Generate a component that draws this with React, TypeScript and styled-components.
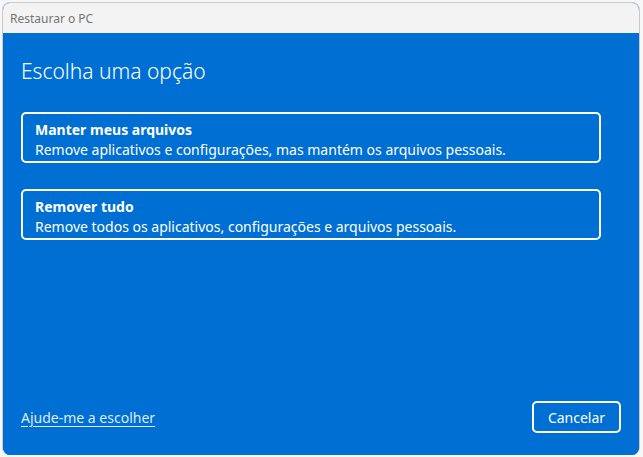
import React from "react";
import styled, { createGlobalStyle } from "styled-components";

const Global = createGlobalStyle`
  html, body { margin: 0; padding: 0; background: #ffffff; }
  body { font-family: "Noto Sans", "Open Sans", sans-serif; }
`;

const Page = styled.div`
  width: 643px;
  height: 457px;
  padding: 2px 3px 2px 2px;
  box-sizing: border-box;
  background: #f7f7f7;
`;

const Window = styled.div`
  width: 638px;
  height: 453px;
  border: 1px solid #c9c9c9;
  border-bottom: none;
  border-radius: 8px;
  overflow: hidden;
  box-sizing: border-box;
  display: flex;
  flex-direction: column;
  background: #006fd3;
`;

const TitleBar = styled.div`
  height: 30px;
  flex: none;
  background: #f3f3f3;
  display: flex;
  align-items: center;
  padding-left: 7px;
  font-size: 12px;
  color: #757575;
`;

const Body = styled.div`
  flex: 1;
  background: #006fd3;
  color: #ffffff;
  display: flex;
  flex-direction: column;
  padding: 22px 18px 22px 18px;
`;

const Heading = styled.h1`
  margin: 0 0 25px 0;
  font-weight: 300;
  font-size: 21px;
  line-height: 32px;
`;

const Options = styled.div`
  display: flex;
  flex-direction: column;
  gap: 26px;
`;

const Option = styled.button`
  all: unset;
  box-sizing: border-box;
  width: 580px;
  height: 51px;
  border: 2px solid #ffffff;
  border-radius: 5px;
  padding: 6px 12px 0 12px;
  display: flex;
  flex-direction: column;
  color: #ffffff;
  font-family: inherit;
`;

const OptionTitle = styled.div`
  font-weight: 700;
  font-size: 14px;
  line-height: 20px;
`;

const OptionDesc = styled.div`
  font-size: 14px;
  line-height: 20px;
`;

const Footer = styled.div`
  margin-top: auto;
  display: flex;
  align-items: center;
  justify-content: space-between;
`;

const HelpLink = styled.a`
  font-size: 14px;
  color: #dfeaf6;
  text-decoration: underline;
  text-underline-offset: 3px;
`;

const CancelButton = styled.button`
  all: unset;
  box-sizing: border-box;
  width: 89px;
  height: 32px;
  border: 2px solid #ffffff;
  border-radius: 5px;
  display: flex;
  align-items: center;
  justify-content: center;
  color: #ffffff;
  font-size: 14px;
  font-family: inherit;
`;

export default function App() {
  return (
    <>
      <Global />
      <Page>
        <Window>
          <TitleBar>Restaurar o PC</TitleBar>
          <Body>
            <Heading>Escolha uma opção</Heading>
            <Options>
              <Option>
                <OptionTitle>Manter meus arquivos</OptionTitle>
                <OptionDesc>Remove aplicativos e configurações, mas mantém os arquivos pessoais.</OptionDesc>
              </Option>
              <Option>
                <OptionTitle>Remover tudo</OptionTitle>
                <OptionDesc>Remove todos os aplicativos, configurações e arquivos pessoais.</OptionDesc>
              </Option>
            </Options>
            <Footer>
              <HelpLink>Ajude-me a escolher</HelpLink>
              <CancelButton>Cancelar</CancelButton>
            </Footer>
          </Body>
        </Window>
      </Page>
    </>
  );
}
